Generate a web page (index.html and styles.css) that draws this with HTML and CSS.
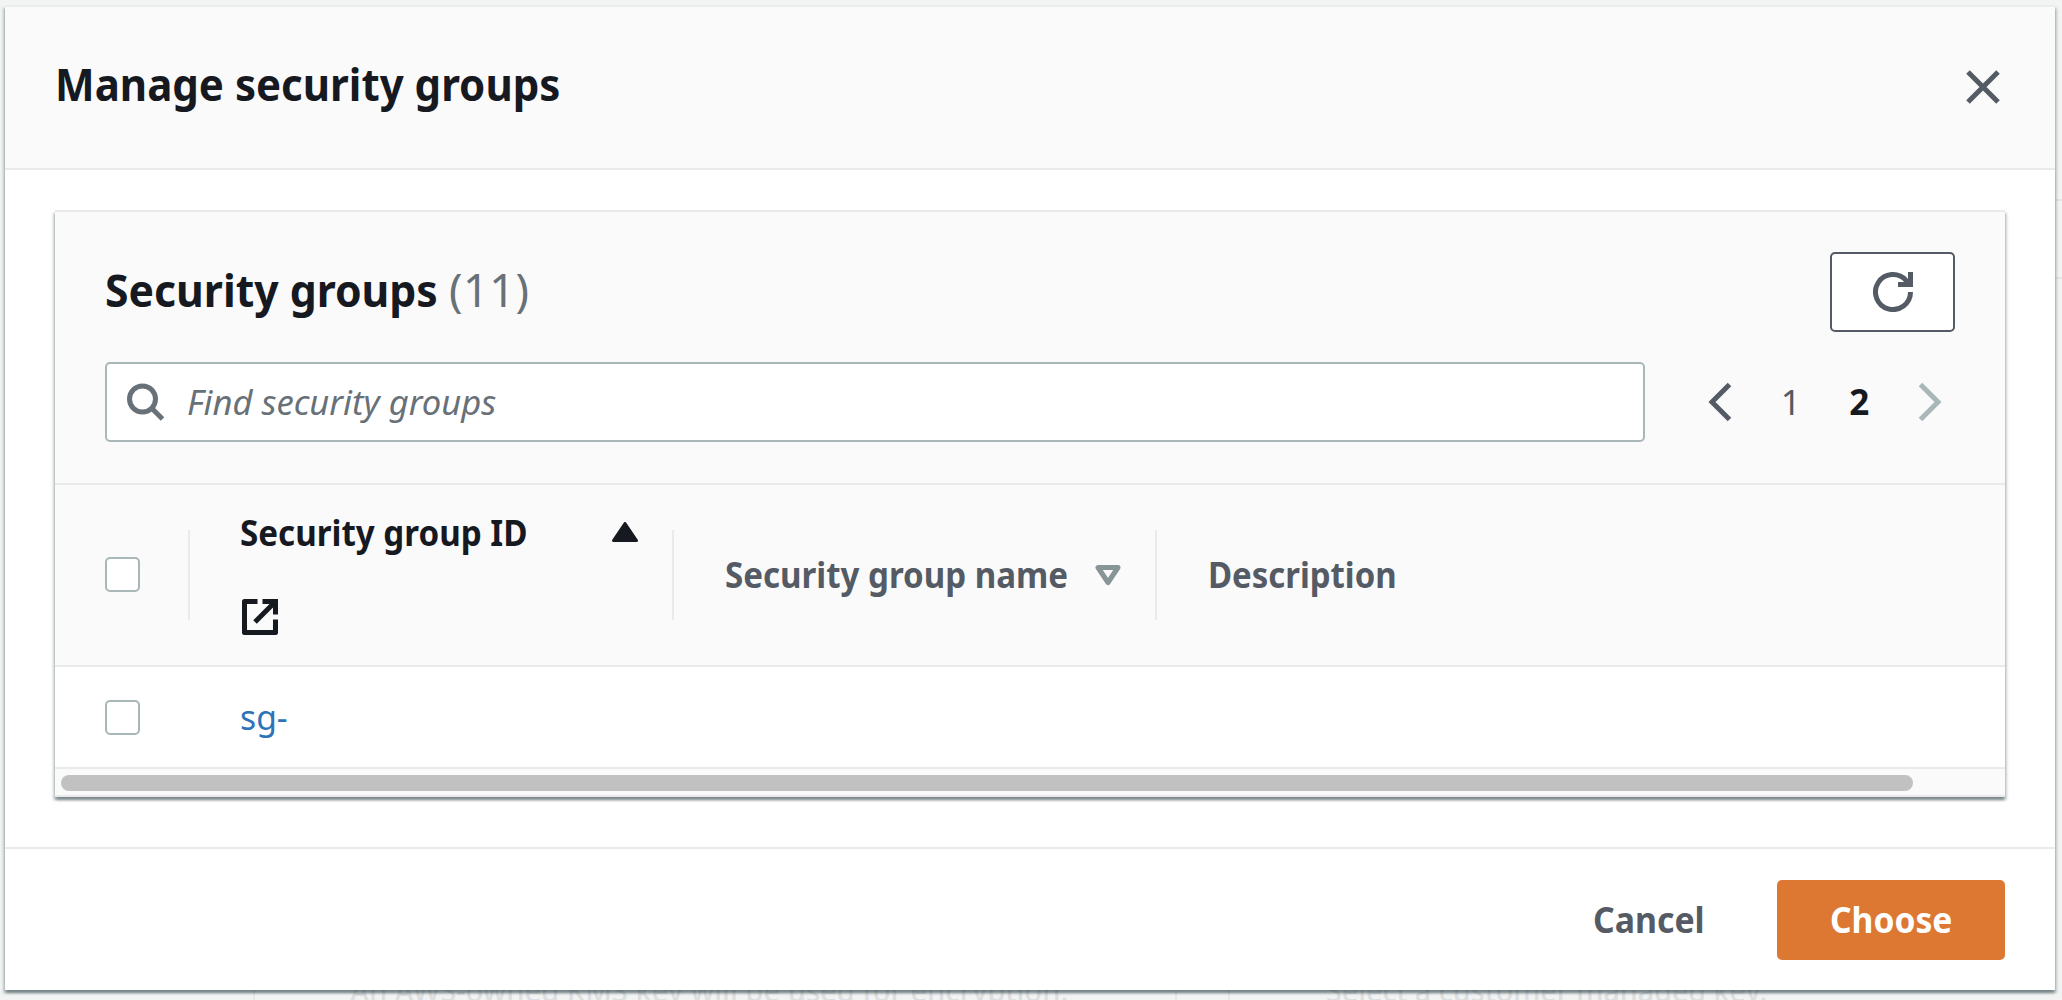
FILE: index.html
```html
<!DOCTYPE html>
<html lang="en">
<head>
<meta charset="utf-8">
<title>Manage security groups</title>
<link rel="stylesheet" href="styles.css">
</head>
<body>
<div class="backdrop">
  <div class="backdrop-panel">
    <div class="option option-owned"><span class="fit fit-owned">An AWS-owned KMS key will be used for encryption.</span></div>
    <div class="option option-managed"><span class="fit fit-managed">Select a customer managed key.</span></div>
  </div>
  <div class="backdrop-aside"></div>
</div>

<main class="modal">
  <header class="modal-header">
    <h1 class="modal-title"><span class="fit fit-title">Manage security groups</span></h1>
    <button class="icon-button" aria-label="Close">
      <svg width="34" height="34" viewBox="0 0 34 34" fill="none" stroke="#545b64" stroke-width="5"><path d="M2 2l30 30M32 2L2 32"/></svg>
    </button>
  </header>

  <div class="modal-body">
    <section class="container">
      <div class="tools">
        <div class="tools-row">
          <h2 class="section-title"><span class="fit fit-section">Security groups</span><span class="counter">(11)</span></h2>
          <button class="refresh" aria-label="Refresh">
            <svg width="40" height="40" viewBox="0 0 40 40" fill="none" stroke="#545b64" stroke-width="5"><path d="M37.5 20A17.5 17.5 0 1 1 33 8.300L36 12"/><path d="M37.500 0V12.500H25"/></svg>
          </button>
        </div>
        <div class="tools-row tools-filter">
          <div class="search">
            <svg width="38" height="38" viewBox="0 0 38 38" fill="none" stroke="#687078" stroke-width="5"><circle cx="15.500" cy="16" r="13"/><path d="M24.500 25L35.500 36"/></svg>
            <span class="fit fit-search">Find security groups</span>
          </div>
          <nav class="pagination">
            <svg width="24" height="40" viewBox="0 0 24 40" fill="none" stroke="#545b64" stroke-width="5"><path d="M21.500 2.500L4 20L21.500 37.500"/></svg>
            <span class="page">1</span>
            <span class="page page-current">2</span>
            <svg width="24" height="40" viewBox="0 0 24 40" fill="none" stroke="#aab7b8" stroke-width="5"><path d="M2.500 2.500L20 20L2.500 37.500"/></svg>
          </nav>
        </div>
      </div>

      <div class="grid-row table-head">
        <div class="cell cell-check"><span class="checkbox"></span><i class="divider"></i></div>
        <div class="cell cell-id">
          <div class="id-label">
            <span class="fit fit-id">Security group ID</span>
            <svg class="external" width="36" height="36" viewBox="0 0 36 36" fill="none" stroke="#16191f" stroke-width="5" stroke-linejoin="round"><path d="M15.500 2.500H2.500V33.500H33.500V20.500"/><path d="M20.500 2.500H33.500V15.500" stroke-linejoin="miter"/><path d="M32.500 3.500L13 23"/></svg>
          </div>
          <svg class="sort-up" width="26" height="20" viewBox="0 0 26 20"><path d="M13 1.500L24.500 18.500H1.500Z" fill="#16191f" stroke="#16191f" stroke-width="3" stroke-linejoin="round"/></svg>
          <i class="divider"></i>
        </div>
        <div class="cell cell-name">
          <span class="fit fit-name">Security group name</span>
          <svg class="sort-down" width="26" height="21" viewBox="0 0 26 21"><path d="M3 2.500H23L13 17.500Z" fill="none" stroke="#879596" stroke-width="5" stroke-linejoin="round"/></svg>
          <i class="divider"></i>
        </div>
        <div class="cell cell-desc"><span class="fit fit-desc">Description</span></div>
      </div>

      <div class="grid-row table-row">
        <div class="cell cell-check"><span class="checkbox"></span></div>
        <div class="cell cell-link"><a class="fit fit-link">sg-</a></div>
      </div>
      <div class="scrollbar"><div class="thumb"></div></div>
    </section>
  </div>

  <footer class="modal-footer">
    <button class="button button-link"><span class="fit fit-cancel">Cancel</span></button>
    <button class="button button-primary"><span class="fit fit-choose">Choose</span></button>
  </footer>
</main>
</body>
</html>
```
FILE: styles.css
```css
* { box-sizing: border-box; }

body {
  margin: 0;
  height: 1000px;
  padding: 5px 7px 10px 5px;
  overflow: hidden;
  background: #f2f3f3;
  color: #16191f;
  font-family: "Noto Sans", sans-serif;
  font-size: 35px;
  line-height: 50px;
}

h1, h2 { margin: 0; }
svg { display: block; flex: none; }

button {
  margin: 0;
  padding: 0;
  border: 0;
  background: none;
  font: inherit;
}

/* Horizontal fitting of the labels */
.fit {
  display: inline-block;
  white-space: nowrap;
  transform-origin: 0 50%;
}
.fit-title { transform: scaleX(.934); }
.fit-section { width: 344px; transform: scaleX(.949); }
.fit-search { transform: scaleX(.988); }
.fit-id { transform: scaleX(.947); }
.fit-name { width: 370px; transform: scaleX(.945); }
.fit-desc { transform: scaleX(.94); }
.fit-link { transform: scaleX(.962); }
.fit-cancel { transform: scaleX(.966); }
.fit-choose { transform: scaleX(.96); }
.fit-owned { transform: scaleX(.97); }
.fit-managed { transform: scaleX(.955); }

/* Dimmed page behind the dialog */
.backdrop { position: absolute; inset: 0; overflow: hidden; }
.backdrop-panel {
  position: absolute;
  left: 202px;
  top: 0;
  right: 0;
  height: 1000px;
  background: #f2f4f4;
}
.option {
  position: absolute;
  bottom: 0;
  height: 60px;
  border: solid #e3e9ec;
  border-width: 0 2px;
  color: #dddfe0;
  font-size: 30px;
  font-weight: 500;
  line-height: 40px;
  padding-top: 31px;
}
.option-owned { left: 51px; width: 924px; padding-left: 95px; }
.option-managed { left: 1026px; width: 900px; padding-left: 96px; }
.backdrop-aside {
  position: absolute;
  right: 0;
  top: 199px;
  width: 10px;
  height: 80px;
  border: solid #e3e5e6;
  border-width: 2px 0;
}

.modal {
  position: relative;
  height: 985px;
  background: #fff;
  border-top: 2px solid #eaeded;
  box-shadow: 0 2.5px 2.5px rgba(0, 28, 36, .3), 2px 2.5px 2.5px rgba(0, 28, 36, .17), -2px 2.5px 2.5px rgba(0, 28, 36, .17);
}
.modal-header {
  display: flex;
  justify-content: space-between;
  height: 163px;
  padding: 48px 55px 0 50px;
  background: #fafafa;
  border-bottom: 2px solid #eaeaea;
}
.modal-title { font-size: 45px; line-height: 57px; }
.icon-button { height: 34px; margin-top: 15px; }

.modal-body { padding: 40px 50px 50px; }
.container {
  background: #fff;
  border-top: 2px solid #eaeaea;
  box-shadow: 0 2.5px 2.5px rgba(0, 28, 36, .3), 2px 2.5px 2.5px rgba(0, 28, 36, .17), -2px 2.5px 2.5px rgba(0, 28, 36, .17);
}
.tools {
  height: 273px;
  padding: 40px 50px 0;
  background: #fafafa;
  border-bottom: 2px solid #eaeaea;
}
.tools-row {
  display: flex;
  justify-content: space-between;
  align-items: center;
  height: 80px;
}
.tools-filter { margin-top: 30px; }
.section-title {
  display: flex;
  margin-bottom: 6px;
  font-size: 45px;
  line-height: 57px;
}
.counter { color: #687078; font-weight: 400; letter-spacing: .5px; }
.refresh {
  display: grid;
  place-items: center;
  width: 125px;
  height: 80px;
  background: #fff;
  border: 2px solid #545b64;
  border-radius: 5px;
}
.search {
  display: flex;
  align-items: center;
  gap: 22px;
  width: 1540px;
  height: 80px;
  padding-left: 20px;
  background: #fff;
  border: 2px solid #aab7b8;
  border-radius: 5px;
  color: #687078;
  font-style: italic;
}
.pagination {
  display: flex;
  align-items: center;
  justify-content: space-between;
  width: 234px;
  margin-right: 13px;
}
.page { width: 20px; color: #545b64; }
.page-current { color: #16191f; font-weight: 700; }

.grid-row {
  display: grid;
  grid-template-columns: 135px 484px 483px 1fr;
}
.cell { display: flex; align-items: center; }
.table-head {
  height: 182px;
  background: #fafafa;
  border-bottom: 2px solid #eaeaea;
  color: #545b64;
  font-weight: 700;
}
.divider { width: 2px; height: 90px; margin-left: auto; background: #eaeaea; }
.cell-check { padding-left: 50px; }
.checkbox {
  width: 35px;
  height: 35px;
  background: #fff;
  border: 2px solid #aab7b8;
  border-radius: 5px;
}
.table-head .checkbox { margin-bottom: 1px; }
.cell-id { padding-left: 50px; color: #16191f; }
.id-label { display: grid; gap: 41px; width: 370px; padding-bottom: 8px; }
.external { margin-left: 2px; }
.sort-up { margin: -86px 0 0 2px; }
.cell-name, .cell-desc { padding-left: 51px; }
.cell-desc .fit, .cell-name .fit { margin-top: -1px; }

.table-row { height: 102px; border-bottom: 2px solid #eaeaea; }
.cell-link { padding-left: 50px; color: #2e73b8; }
.scrollbar {
  height: 28px;
  padding: 6px;
  background: #fafafa;
  border-bottom: 2px solid #eaeaea;
}
.thumb { width: 1852px; height: 16px; border-radius: 8px; background: #c1c1c1; }

.modal-footer {
  display: flex;
  justify-content: flex-end;
  height: 143px;
  padding: 31px 50px 0;
  border-top: 2px solid #eaeaea;
}
.button { height: 80px; font-weight: 700; text-align: left; }
.button-link { width: 184px; color: #545b64; }
.button-primary {
  width: 228px;
  padding-left: 53px;
  border-radius: 5px;
  background: #dd7833;
  color: #fff;
}
```
